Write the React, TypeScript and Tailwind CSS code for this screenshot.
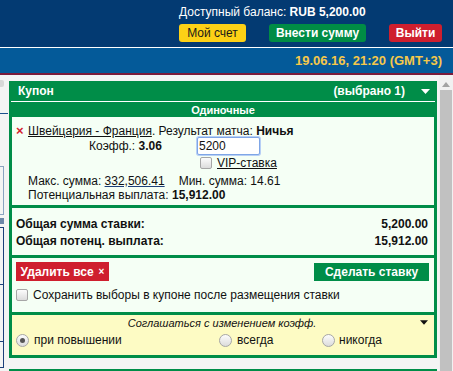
import React from "react";

// ==== small pieces ====
const Check = ({ className = "" }: { className?: string }) => (
  <span
    className={`inline-block w-[12px] h-[12px] rounded-[2px] border border-[#a6a6a6] bg-gradient-to-b from-[#fcfcfc] to-[#dcdcdc] ${className}`}
  />
);

const Radio = ({ on = false }: { on?: boolean }) => (
  <span className="relative inline-flex w-[13px] h-[13px] items-center justify-center rounded-full border border-[#a6a6a6] bg-gradient-to-b from-[#fcfcfc] to-[#dcdcdc]">
    {on && <span className="w-[5px] h-[5px] rounded-full bg-[#555]" />}
  </span>
);

const Tri = ({ className = "" }: { className?: string }) => (
  <svg width="9" height="5" viewBox="0 0 9 5" className={className}>
    <polygon points="0,0 9,0 4.5,5" fill="currentColor" />
  </svg>
);

// ==== page ====
export default function App() {
  return (
    <div className="w-[453px] h-[371px] overflow-hidden bg-[#f4f4f4] font-['Liberation_Sans',Arial,sans-serif] text-[12px] leading-[14px] text-[#111]">
      {/* top bar */}
      <div className="h-[47px] bg-[#033a72] pt-[5px]">
        <div className="ml-[179px] text-white">
          Доступный баланс: <b>RUB 5,200.00</b>
        </div>
        <div className="ml-[179px] mt-[5px] w-[263px] flex justify-between">
          <span className="w-[67px] h-[18px] rounded-[3px] bg-[#fdd116] text-[#1a1a1a] flex items-center justify-center">
            Мой счет
          </span>
          <span className="w-[97px] h-[18px] rounded-[3px] bg-[#008c45] text-white font-bold flex items-center justify-center">
            Внести сумму
          </span>
          <span className="w-[53px] h-[18px] rounded-[3px] bg-[#cf1f2e] text-white font-bold flex items-center justify-center">
            Выйти
          </span>
        </div>
      </div>
      <div className="h-[1px] bg-white" />
      <div className="h-[25px] bg-[#045a99] flex items-center justify-end pr-[11px]">
        <span className="text-[#f5c84a] font-bold text-[13px]">19.06.16, 21:20 (GMT+3)</span>
      </div>
      <div className="h-[2px] bg-[#7b1b3b]" />

      {/* body */}
      <div className="flex h-[296px]">
        {/* cut-off left panel */}
        <div className="w-[9px] shrink-0 overflow-hidden relative">
          <div className="mt-[5px] w-[4px] h-[7px] rounded-r-[2px] bg-[#d8d8d8]" />
          <div className="mt-[26px] w-[8px] h-[1px] bg-[#1c4f8c]" />
          <div className="mt-[52px] w-[4px] h-[49px] border border-l-0 border-[#8aa3c2]" />
          <div className="mt-[3px] w-[4px] h-[6px] bg-[#6c86a8]" />
          <div className="mt-[3px] w-[4px] h-[141px] border border-l-0 border-[#1c3f7a] flex flex-col">
            <div className="h-[57px] border-b border-[#1c3f7a]" />
            <div className="h-[57px] border-b border-[#1c3f7a]" />
          </div>
        </div>

        {/* coupon column */}
        <div className="w-[428px] shrink-0 pt-[6px]">
          <div className="bg-[#008d48] px-[2px]">
            <div className="h-[20px] flex items-center text-white font-bold pl-[7px] pr-[5px]">
              <span>Купон</span>
              <span className="ml-auto">(выбрано 1)</span>
              <Tri className="ml-[16px] text-white" />
            </div>
            <div className="h-[1px] bg-white" />
            <div className="h-[15px] flex items-center justify-center text-white font-bold text-[11px]">
              Одиночные
            </div>
          </div>

          <div className="border-[3px] border-t-0 border-[#008d48] bg-[#f5fff5]">
            {/* selection */}
            <div className="pt-[7px] pb-[3px] pl-[4px]">
              <div className="flex items-center h-[14px]">
                <span className="w-[12px] text-[#d3212f] font-bold text-[13px] leading-[14px]">×</span>
                <span className="underline">Швейцария - Франция</span>
                <span>. Результат матча:&nbsp;</span>
                <b>Ничья</b>
              </div>
              <div className="flex items-center -mt-[1px] h-[18px]">
                <span className="ml-[73px] w-[108px]">
                  Коэфф.: <b>3.06</b>
                </span>
                <span className="w-[63px] h-[18px] border border-[#7fa6e6] rounded-[2px] bg-white shadow-[0_0_0_1px_#b7cff5] pl-[1px] flex items-center">
                  5200
                </span>
              </div>
              <div className="flex items-center mt-[1px] h-[14px] ml-[184px]">
                <Check />
                <span className="ml-[5px] underline">VIP-ставка</span>
              </div>
              <div className="flex mt-[4px] ml-[12px] h-[14px]">
                <span>
                  Макс. сумма: <span className="underline decoration-[#1c3f7a]">332,506.41</span>
                </span>
                <span className="ml-[14px]">Мин. сумма: 14.61</span>
              </div>
              <div className="ml-[12px] h-[14px]">
                Потенциальная выплата: <b>15,912.00</b>
              </div>
            </div>

            {/* totals */}
            <div className="border-t-[3px] border-[#008d48] pt-[9px] pb-[7px] pl-[4px] pr-[6px] font-bold">
              <div className="flex justify-between h-[14px]">
                <span>Общая сумма ставки:</span>
                <span>5,200.00</span>
              </div>
              <div className="flex justify-between mt-[3px] h-[14px]">
                <span>Общая потенц. выплата:</span>
                <span>15,912.00</span>
              </div>
            </div>

            {/* actions */}
            <div className="border-t-[3px] border-[#008d48] pt-[4px] pb-[10px] pl-[4px] pr-[5px]">
              <div className="flex items-start justify-between h-[19px]">
                <span className="w-[93px] h-[19px] bg-[#cf1f2e] text-white font-bold flex items-center justify-center">
                  Удалить все <span className="ml-[5px] text-[10px]">×</span>
                </span>
                <span className="mt-[1px] w-[115px] h-[18px] bg-[#008d48] text-white font-bold flex items-center justify-center">
                  Сделать ставку
                </span>
              </div>
              <div className="flex items-center mt-[7px] h-[14px]">
                <Check />
                <span className="ml-[5px]">Сохранить выборы в купоне после размещения ставки</span>
              </div>
            </div>

            {/* odds change */}
            <div className="border-t-[3px] border-[#008d48] bg-[#fdfbc4] pt-[1px] pb-[7px] pl-[4px] pr-[6px]">
              <div className="relative flex items-center justify-center italic text-[11px] h-[14px]">
                Соглашаться с изменением коэфф.
                <Tri className="absolute right-0 top-[4px] text-[#111] w-[8px]" />
              </div>
              <div className="flex items-center mt-[2px] h-[16px]">
                <span className="flex items-center w-[203px]">
                  <Radio on />
                  <span className="ml-[5px]">при повышении</span>
                </span>
                <span className="flex items-center w-[103px]">
                  <Radio />
                  <span className="ml-[5px]">всегда</span>
                </span>
                <span className="flex items-center">
                  <Radio />
                  <span className="ml-[4px]">никогда</span>
                </span>
              </div>
            </div>
          </div>

          <div className="mt-[11px] h-[3px] bg-[#008d48]" />
        </div>

        {/* scrollbar */}
        <div className="ml-[2px] w-[14px] bg-[#f1f1f1] flex flex-col">
          <div className="h-[15px] flex items-center justify-center pt-[4px]">
            <svg width="8" height="5" viewBox="0 0 8 5">
              <polygon points="0,5 8,5 4,0" fill="#a3a3a3" />
            </svg>
          </div>
          <div className="flex-1 mx-[1px] bg-[#c1c1c1]" />
        </div>
      </div>
    </div>
  );
}
